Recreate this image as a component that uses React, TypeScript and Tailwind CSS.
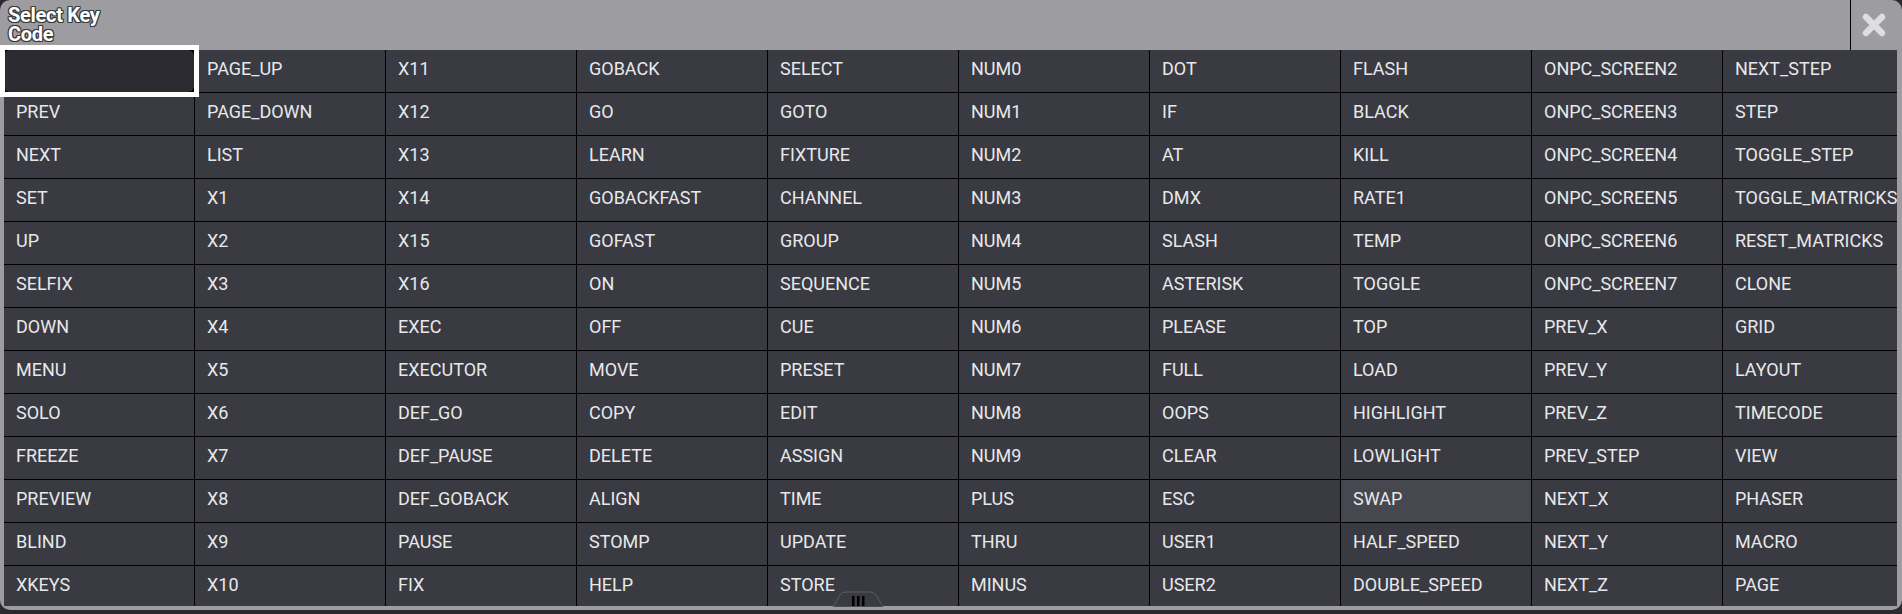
import React from "react";

const cols: string[][] = [
  ["", "PREV", "NEXT", "SET", "UP", "SELFIX", "DOWN", "MENU", "SOLO", "FREEZE", "PREVIEW", "BLIND", "XKEYS"],
  ["PAGE_UP", "PAGE_DOWN", "LIST", "X1", "X2", "X3", "X4", "X5", "X6", "X7", "X8", "X9", "X10"],
  ["X11", "X12", "X13", "X14", "X15", "X16", "EXEC", "EXECUTOR", "DEF_GO", "DEF_PAUSE", "DEF_GOBACK", "PAUSE", "FIX"],
  ["GOBACK", "GO", "LEARN", "GOBACKFAST", "GOFAST", "ON", "OFF", "MOVE", "COPY", "DELETE", "ALIGN", "STOMP", "HELP"],
  ["SELECT", "GOTO", "FIXTURE", "CHANNEL", "GROUP", "SEQUENCE", "CUE", "PRESET", "EDIT", "ASSIGN", "TIME", "UPDATE", "STORE"],
  ["NUM0", "NUM1", "NUM2", "NUM3", "NUM4", "NUM5", "NUM6", "NUM7", "NUM8", "NUM9", "PLUS", "THRU", "MINUS"],
  ["DOT", "IF", "AT", "DMX", "SLASH", "ASTERISK", "PLEASE", "FULL", "OOPS", "CLEAR", "ESC", "USER1", "USER2"],
  ["FLASH", "BLACK", "KILL", "RATE1", "TEMP", "TOGGLE", "TOP", "LOAD", "HIGHLIGHT", "LOWLIGHT", "SWAP", "HALF_SPEED", "DOUBLE_SPEED"],
  ["ONPC_SCREEN2", "ONPC_SCREEN3", "ONPC_SCREEN4", "ONPC_SCREEN5", "ONPC_SCREEN6", "ONPC_SCREEN7", "PREV_X", "PREV_Y", "PREV_Z", "PREV_STEP", "NEXT_X", "NEXT_Y", "NEXT_Z"],
  ["NEXT_STEP", "STEP", "TOGGLE_STEP", "TOGGLE_MATRICKS", "RESET_MATRICKS", "CLONE", "GRID", "LAYOUT", "TIMECODE", "VIEW", "PHASER", "MACRO", "PAGE"],
];

export default function App() {
  const cells: { label: string; r: number; c: number }[] = [];
  for (let r = 0; r < 13; r++) {
    for (let c = 0; c < 10; c++) {
      cells.push({ label: cols[c][r], r, c });
    }
  }
  return (
    <div className="h-[614px] w-[1902px] bg-[#2a2a2c] overflow-hidden" style={{ fontFamily: "Roboto, 'Liberation Sans', sans-serif" }}>
      <div className="relative flex h-[610px] w-[1902px] flex-col overflow-hidden rounded-[10px] bg-[#9c9ca1] pb-[4px]">
        <div className="flex h-[50px] shrink-0">
          <div
            className="flex-1 pl-[8px] pt-[6px] text-[20px] font-bold leading-[19px] tracking-[-0.3px] text-white [text-shadow:1px_1px_0_#3a3a3a,-1px_-1px_0_#3a3a3a,1px_-1px_0_#3a3a3a,-1px_1px_0_#3a3a3a,0_1px_0_#3a3a3a,0_-1px_0_#3a3a3a,1px_0_0_#3a3a3a,-1px_0_0_#3a3a3a]"
          >
            <div>Select Key</div>
            <div>Code</div>
          </div>
          <div className="mr-[5px] flex w-[47px] items-center justify-center border-l border-black pb-[1px]">
            <svg width="24" height="24" viewBox="0 0 24 24">
              <path d="M4 4 L20 20 M20 4 L4 20" stroke="#dedede" strokeWidth="6.5" strokeLinecap="round" />
            </svg>
          </div>
        </div>
        <div className="mr-[5px] mt-[-5px] min-h-0 flex-1 overflow-clip pl-[4px] pt-[5px]">
          <div className="grid w-max grid-cols-[repeat(10,190px)] auto-rows-[42px] gap-px bg-black">
            {cells.map(({ label, r, c }) => {
              if (r === 0 && c === 0) {
                return (
                  <div key="sel" className="relative z-10 bg-black">
                    <div className="absolute inset-0 rounded-[6px] bg-[#2b2b31]" />
                    <div className="absolute -inset-[5px] left-[-4px] border-[5px] border-white" />
                  </div>
                );
              }
              const hl = label === "SWAP";
              return (
                <div
                  key={label}
                  className={`flex items-center overflow-hidden whitespace-nowrap pb-[5px] pl-[12px] text-[18px] text-[#e8e8ea] ${hl ? "bg-[#46474f]" : "bg-[#393a42]"}`}
                >
                  {label}
                </div>
              );
            })}
          </div>
        </div>
        <svg className="absolute left-[832px] top-[591px]" width="52" height="16" viewBox="0 0 52 16">
          <path d="M1 16 L8 4 Q10 1 14 1 L38 1 Q42 1 44 4 L51 16 Z" fill="#393a42" stroke="#5c5d64" strokeWidth="1" />
          <rect x="20" y="5" width="2.5" height="10" fill="#000" />
          <rect x="25" y="5" width="2.5" height="10" fill="#000" />
          <rect x="30" y="5" width="2.5" height="10" fill="#000" />
        </svg>
      </div>
    </div>
  );
}
